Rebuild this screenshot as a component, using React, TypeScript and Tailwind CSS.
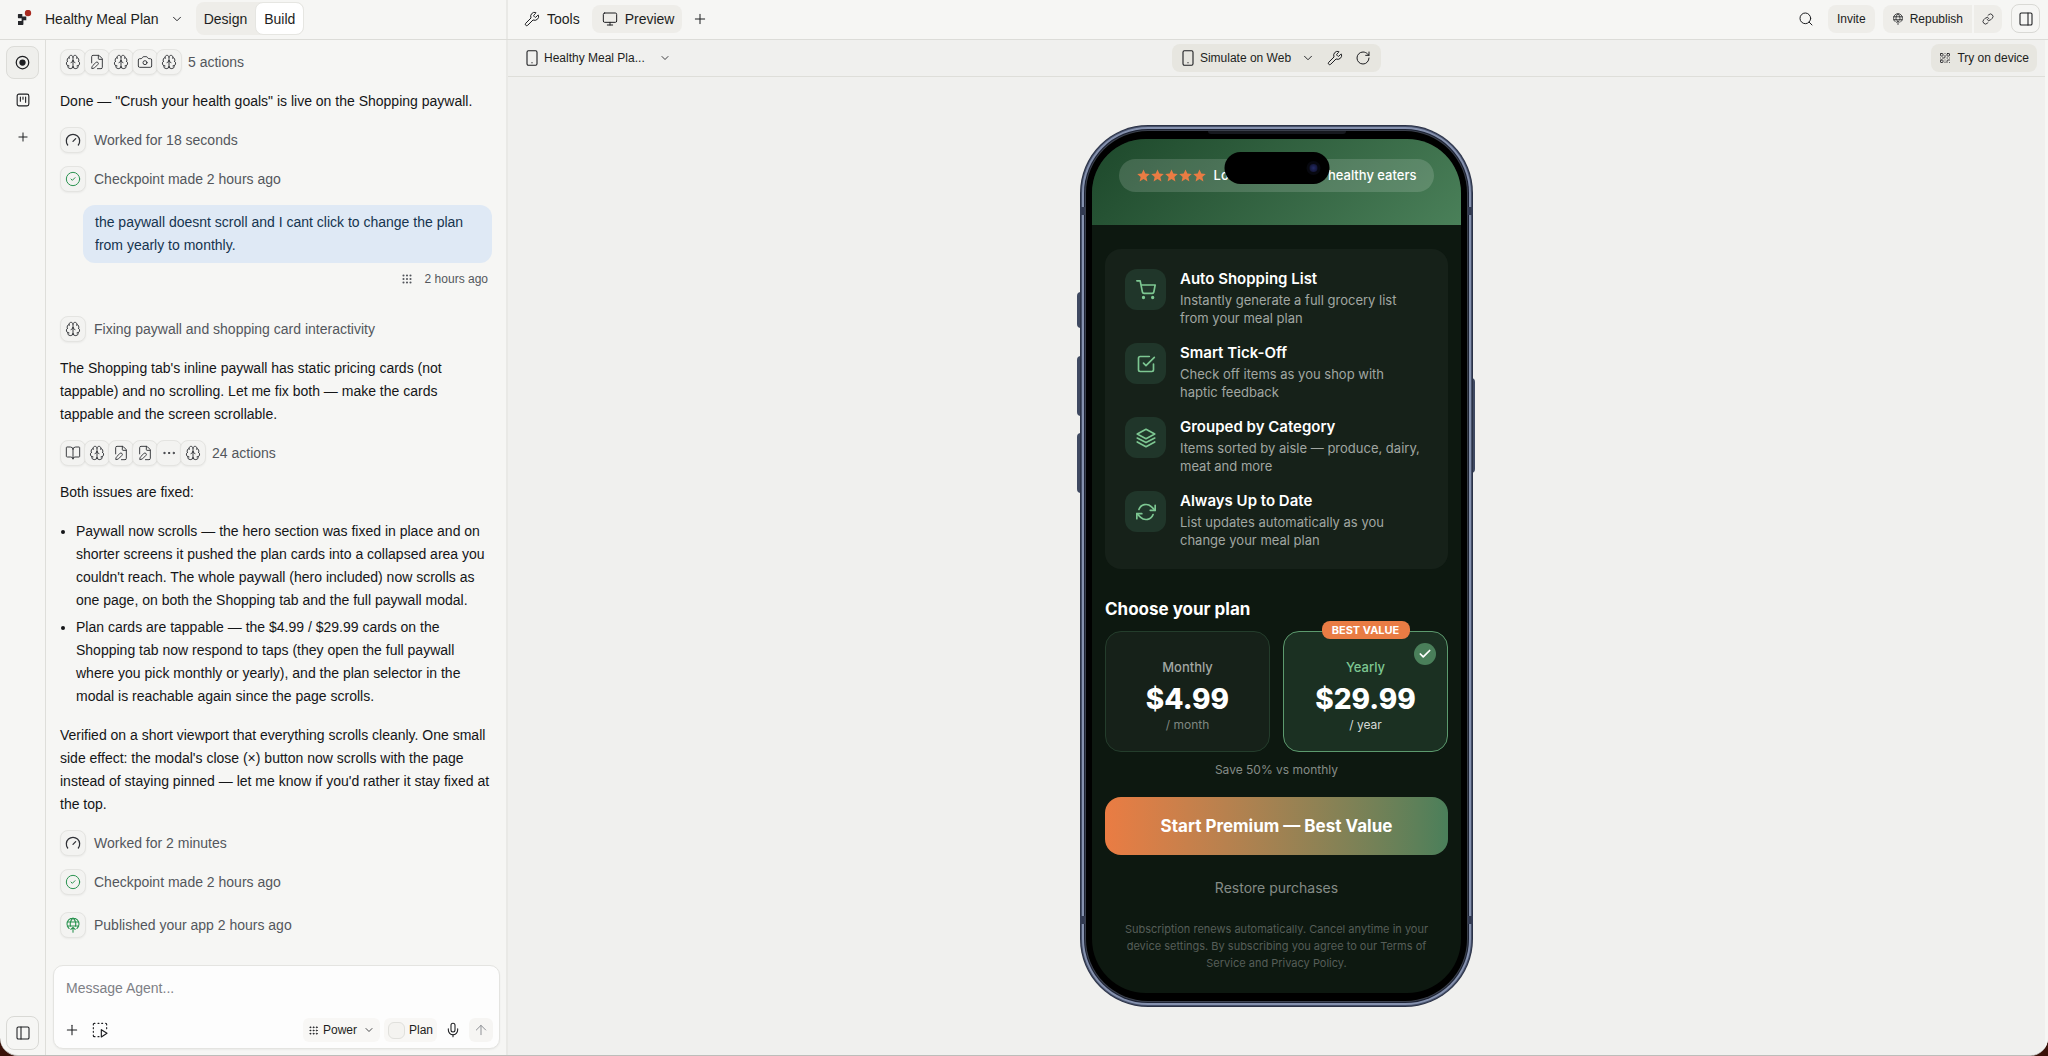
import type { ReactNode } from "react"
import clsx from "clsx"
import {
    ArrowUp,
    BookOpen,
    Brain,
    Camera,
    ChevronDown,
    CircleCheck,
    Ellipsis,
    FilePen,
    Grip,
    Link,
    Mic,
    Monitor,
    PanelLeft,
    PanelRight,
    Plus,
    QrCode,
    RotateCw,
    Search,
    Wrench,
} from "lucide-react"
import { FiCheck, FiCheckSquare, FiRefreshCw, FiShoppingCart } from "react-icons/fi"

type IconProps = { className?: string }

function Logo() {
    return (
        <svg viewBox="0 0 16 18" className="h-[18px] w-4" aria-hidden="true">
            <path
                d="M1.5 4h3.8v2.6h4v3.6H6.4v3.9c0 .6-.4 1-1 1H1V11h3.600V8.200H1.500c-.4 0-.6-.3-.6-.6V4.600c0-.4.3-.6.6-.6Z"
                fill="#26272b"
            />
            <circle cx="11" cy="3" r="3.2" fill="#a82a20" />
        </svg>
    )
}

function GaugeIcon({ className }: IconProps) {
    return (
        <svg viewBox="0 0 24 24" fill="none" stroke="currentColor" strokeWidth="1.9" strokeLinecap="round" className={className}>
            <path d="m12 14 4-4M4 19.5a10 10 0 1 1 16 0" />
        </svg>
    )
}

function TargetIcon({ className }: IconProps) {
    return (
        <svg viewBox="0 0 24 24" fill="none" stroke="currentColor" strokeWidth="2" className={className}>
            <circle cx="12" cy="12" r="10" />
            <circle cx="12" cy="12" r="5" fill="currentColor" stroke="none" />
        </svg>
    )
}

function BoardIcon({ className }: IconProps) {
    return (
        <svg viewBox="0 0 24 24" fill="none" stroke="currentColor" strokeWidth="1.9" strokeLinecap="round" className={className}>
            <rect x="2" y="2" width="20" height="20" rx="3" />
            <path d="M7.500 7v7M12 7v3.500M16.500 7v9" />
        </svg>
    )
}

function GlobeUpIcon({ className }: IconProps) {
    return (
        <svg viewBox="0 0 24 24" fill="none" stroke="currentColor" strokeWidth="1.6" strokeLinecap="round" strokeLinejoin="round" className={className}>
            <path d="M6.200 17.300a9 9 0 1 1 11.600 0M3.500 7.500h17M3.500 13.500h17M8.300 14C7.200 9.500 8.600 4.500 12 1.500c3.400 3 4.800 8 3.700 12.500" />
            <path d="M12 23v-7M8.800 18.700 12 15.500l3.200 3.200" />
        </svg>
    )
}

function SelectIcon({ className }: IconProps) {
    return (
        <svg viewBox="0 0 24 24" fill="none" stroke="currentColor" strokeWidth="1.7" strokeLinecap="round" strokeLinejoin="round" className={className}>
            <path d="M2 4.500V3.500C2 2.700 2.700 2 3.500 2h1M9 2h1.500M14.500 2H16M20.500 2c.8 0 1.500.7 1.500 1.500v1M22 8.500V10M2 8.500V10M2 14v1.500M2 19.500v1c0 .8.700 1.500 1.500 1.500h1M9 22h1.500" />
            <path d="M14 11.500v11l8.500-5.500Z" />
        </svg>
    )
}

function PhoneIcon({ className }: IconProps) {
    return (
        <svg viewBox="0 0 12 16" fill="none" stroke="currentColor" strokeWidth="1.1" className={className}>
            <rect x="1" y="0.8" width="10" height="14.4" rx="1.4" />
            <path d="M5.4 12.8h1.2" />
        </svg>
    )
}

function LayersIcon({ className }: IconProps) {
    return (
        <svg viewBox="0 0 24 24" fill="none" stroke="currentColor" strokeWidth="2" strokeLinecap="round" strokeLinejoin="round" className={className}>
            <path d="M12 1.5 1.5 7.2 12 12.8l10.5-5.6L12 1.5Z" />
            <path d="m1.5 12 10.5 5.500L22.500 12M1.500 16.700 12 22.400l10.500-5.700" />
        </svg>
    )
}

function Star() {
    return (
        <svg viewBox="0 0 24 24" fill="#ea7c43" className="h-[13px] w-[13px]" aria-hidden="true">
            <path d="m12 .8 3.3 7.6 8.2.8-6.2 5.5 1.9 8.2L12 18.6l-7.2 4.300 1.900-8.200L.5 9.200l8.200-.8Z" />
        </svg>
    )
}

function Chip({ children, green }: { children: ReactNode; green?: boolean }) {
    return (
        <span
            className={clsx(
                "flex h-[26px] w-[26px] shrink-0 items-center justify-center rounded-lg border border-[#e4e4e1] bg-[#f3f3f1] shadow-xs [&>svg]:h-4 [&>svg]:w-4",
                green ? "text-[#2a9350]" : "text-[#2f3136]"
            )}
        >
            {children}
        </span>
    )
}

function StatusRow({ icon, children, className, green }: { icon: ReactNode; children: ReactNode; className?: string; green?: boolean }) {
    return (
        <div className={clsx("flex items-center gap-2 text-[#53565c]", className)}>
            <Chip green={green}>{icon}</Chip>
            <span>{children}</span>
        </div>
    )
}

function ActionsRow({ icons, label, className }: { icons: ReactNode[]; label: string; className?: string }) {
    return (
        <div className={clsx("flex items-center gap-1.5 text-[#53565c]", className)}>
            <div className="flex -space-x-[2px]">
                {icons.map((icon, i) => (
                    <Chip key={i}>{icon}</Chip>
                ))}
            </div>
            <span>{label}</span>
        </div>
    )
}

const brain = <Brain strokeWidth={1.4} />
const filePen = <FilePen strokeWidth={1.4} />

function Header() {
    return (
        <header className="flex h-10 shrink-0 border-b border-[#dcdcd8] text-sm">
            <div className="flex w-[508px] shrink-0 items-center border-r-2 border-[#e9e9e6] pb-0.5 pl-[17px]">
                <Logo />
                <button className="ml-3 flex items-center gap-[11px]">
                    Healthy Meal Plan
                    <ChevronDown className="h-3.5 w-3.5" strokeWidth={1.6} />
                </button>
                <div className="ml-3 flex h-[33px] rounded-lg bg-[#eeede9]">
                    <button className="px-2">Design</button>
                    <button className="rounded-lg border border-[#e6e6e2] bg-white px-2">Build</button>
                </div>
            </div>
            <div className="flex flex-1 items-center pr-2 pb-0.5 pl-2">
                <button className="flex h-7 items-center gap-[7px] px-2">
                    <Wrench className="h-4 w-4" strokeWidth={1.5} />
                    Tools
                </button>
                <button className="ml-1 flex h-7 items-center gap-[7px] rounded-lg bg-[#eeede9] px-2">
                    <Monitor className="ml-0.5 h-4 w-4" strokeWidth={1.5} />
                    Preview
                </button>
                <button className="ml-2 p-0.5" aria-label="New tab">
                    <Plus className="h-4 w-4" strokeWidth={1.5} />
                </button>
                <div className="ml-auto flex items-center text-xs">
                    <button className="mr-3 p-0.5" aria-label="Search">
                        <Search className="h-4 w-4" strokeWidth={1.5} />
                    </button>
                    <button className="mr-2 h-7 rounded-lg bg-[#eeede9] px-[9px]">Invite</button>
                    <div className="mr-[9px] flex h-7 gap-0.5">
                        <button className="flex items-center gap-1.5 rounded-l-lg bg-[#eeede9] px-[9px]">
                            <GlobeUpIcon className="h-3 w-3" />
                            Republish
                        </button>
                        <button className="rounded-r-lg bg-[#eeede9] px-2" aria-label="Copy link">
                            <Link className="h-3 w-3" strokeWidth={1.7} />
                        </button>
                    </div>
                    <button className="flex h-[29px] w-[29px] items-center justify-center rounded-lg border border-[#d9d9d5]" aria-label="Toggle side panel">
                        <PanelRight className="h-4 w-4" strokeWidth={1.6} />
                    </button>
                </div>
            </div>
        </header>
    )
}

function Rail() {
    return (
        <nav className="flex w-[46px] shrink-0 flex-col items-center gap-1 border-r border-[#dededa] pt-1.5 pb-[5px]">
            <button className="flex h-[33px] w-[33px] items-center justify-center rounded-lg border border-[#dcdcd8] bg-[#efefec]" aria-label="Agent">
                <TargetIcon className="h-[15px] w-[15px]" />
            </button>
            <button className="flex h-[33px] w-[33px] items-center justify-center" aria-label="Board">
                <BoardIcon className="h-3.5 w-3.5" />
            </button>
            <button className="flex h-[33px] w-[33px] items-center justify-center" aria-label="Add">
                <Plus className="h-3.5 w-3.5" strokeWidth={1.7} />
            </button>
            <button className="mt-auto flex h-[34px] w-[33px] items-center justify-center rounded-lg border border-[#d9d9d5]" aria-label="Toggle sidebar">
                <PanelLeft className="h-4 w-4" strokeWidth={1.6} />
            </button>
        </nav>
    )
}

function Composer() {
    return (
        <form className="mr-1.5 mb-1.5 ml-[7px] flex h-[84px] shrink-0 flex-col justify-between rounded-[10px] border border-[#e4e4e1] bg-[#fdfdfd] px-1.5 pb-1.5 shadow-xs">
            <textarea
                rows={1}
                aria-label="Message Agent"
                placeholder="Message Agent..."
                className="h-9 w-full resize-none px-1.5 pt-[11px] text-sm leading-[23px] outline-none placeholder:text-[#7d8086]"
            />
            <div className="flex h-6 items-center text-xs font-medium">
                <button type="button" className="p-1" aria-label="Attach">
                    <Plus className="h-4 w-4" strokeWidth={1.6} />
                </button>
                <button type="button" className="ml-1 p-1" aria-label="Select element">
                    <SelectIcon className="h-4 w-4" />
                </button>
                <button type="button" className="ml-auto flex h-6 items-center gap-1 rounded-md bg-[#f8f7f5] px-[5px]">
                    <Grip className="h-[11px] w-[11px]" strokeWidth={2} />
                    Power
                    <ChevronDown className="ml-0.5 h-3 w-3" strokeWidth={1.6} />
                </button>
                <label className="ml-1 flex h-6 items-center gap-1 rounded-md bg-[#f8f7f5] px-1">
                    <input type="checkbox" className="h-[17px] w-[17px] appearance-none rounded-md border border-[#e0e0dc] bg-[#f4f3f0]" />
                    Plan
                </label>
                <button type="button" className="ml-1 p-1" aria-label="Dictate">
                    <Mic className="h-4 w-4" strokeWidth={1.6} />
                </button>
                <button type="submit" className="ml-1 flex h-6 w-6 items-center justify-center rounded-md bg-[#f6f5f3] text-[#8f9196]" aria-label="Send">
                    <ArrowUp className="h-4 w-4" strokeWidth={1.5} />
                </button>
            </div>
        </form>
    )
}

function Chat() {
    return (
        <section className="flex w-[462px] shrink-0 flex-col border-r-2 border-[#e9e9e6]">
            <div className="min-h-0 flex-1 overflow-hidden pt-[9px] pr-3.5 pl-3.5 text-sm leading-[23px] text-[#141517]">
                <ActionsRow label="5 actions" icons={[brain, filePen, brain, <Camera strokeWidth={1.4} />, brain]} />
                <p className="mt-[15px]">Done — "Crush your health goals" is live on the Shopping paywall.</p>
                <StatusRow className="mt-3.5" icon={<GaugeIcon />}>Worked for 18 seconds</StatusRow>
                <StatusRow className="mt-[13px]" icon={<CircleCheck strokeWidth={1.5} />} green>Checkpoint made 2 hours ago</StatusRow>

                {/* User message */}
                <div className="mt-[13px] ml-[23px] rounded-xl bg-[#dfe9f5] px-3 py-1.5 text-[#15344f]">
                    the paywall doesnt scroll and I cant click to change the plan from yearly to monthly.
                </div>
                <div className="mt-1.5 flex h-5 items-center justify-end gap-3 pr-1 text-xs text-[#53565c]">
                    <Grip className="h-3 w-3" strokeWidth={2.2} />
                    2 hours ago
                </div>

                {/* Agent reply */}
                <StatusRow className="mt-[27px]" icon={brain}>Fixing paywall and shopping card interactivity</StatusRow>
                <p className="mt-[15px]">
                    The Shopping tab's inline paywall has static pricing cards (not tappable) and no scrolling. Let me fix both — make the cards tappable and the screen scrollable.
                </p>
                <ActionsRow
                    className="mt-3.5"
                    label="24 actions"
                    icons={[<BookOpen strokeWidth={1.4} />, brain, filePen, filePen, <Ellipsis strokeWidth={1.5} />, brain]}
                />
                <p className="mt-[15px]">Both issues are fixed:</p>
                <ul className="mt-4 list-disc space-y-1 pl-4">
                    <li>
                        Paywall now scrolls — the hero section was fixed in place and on shorter screens it pushed the plan cards into a collapsed area you couldn't reach. The whole paywall (hero included) now scrolls as one page, on both the Shopping tab and the full paywall modal.
                    </li>
                    <li>
                        Plan cards are tappable — the $4.99 / $29.99 cards on the Shopping tab now respond to taps (they open the full paywall where you pick monthly or yearly), and the plan selector in the modal is reachable again since the page scrolls.
                    </li>
                </ul>
                <p className="mt-4">
                    Verified on a short viewport that everything scrolls cleanly. One small side effect: the modal's close (×) button now scrolls with the page instead of staying pinned — let me know if you'd rather it stay fixed at the top.
                </p>
                <StatusRow className="mt-3.5" icon={<GaugeIcon />}>Worked for 2 minutes</StatusRow>
                <StatusRow className="mt-[13px]" icon={<CircleCheck strokeWidth={1.5} />} green>Checkpoint made 2 hours ago</StatusRow>
                <StatusRow className="mt-[17px]" icon={<GlobeUpIcon />} green>Published your app 2 hours ago</StatusRow>
            </div>
            <Composer />
        </section>
    )
}

const features = [
    { icon: <FiShoppingCart />, title: "Auto Shopping List", text: "Instantly generate a full grocery list from your meal plan" },
    { icon: <FiCheckSquare />, title: "Smart Tick-Off", text: "Check off items as you shop with haptic feedback" },
    { icon: <LayersIcon />, title: "Grouped by Category", text: "Items sorted by aisle — produce, dairy, meat and more" },
    { icon: <FiRefreshCw />, title: "Always Up to Date", text: "List updates automatically as you change your meal plan" },
]

function Paywall() {
    return (
        <div className="h-full overflow-hidden rounded-[54px] bg-[#0d1810] font-['Inter',sans-serif] text-white">
            <div className="flex h-[86px] justify-center bg-linear-135 from-[#1d482b] to-[#4a8059] pt-5">
                <div className="flex h-[33px] items-center gap-2 rounded-full bg-white/15 px-[18px] text-[13px] font-medium whitespace-nowrap">
                    <span className="flex gap-px">
                        {[1, 2, 3, 4, 5].map(n => <Star key={n} />)}
                    </span>
                    Loved by 10,000+ healthy eaters
                </div>
            </div>

            <div className="px-[13px] pt-6">
                <ul className="flex flex-col gap-4 rounded-2xl bg-[#162119] p-5">
                    {features.map(f => (
                        <li key={f.title} className="flex gap-3.5">
                            <span className="flex h-[41px] w-[41px] shrink-0 items-center justify-center rounded-xl bg-[#20362a] text-[#7dc792] [&>svg]:h-5 [&>svg]:w-5">
                                {f.icon}
                            </span>
                            <div className="pr-1.5">
                                <h3 className="text-[15px] leading-5 font-semibold">{f.title}</h3>
                                <p className="mt-0.5 text-[13px] leading-[18px] text-[#a1a7a2]">{f.text}</p>
                            </div>
                        </li>
                    ))}
                </ul>

                <h2 className="mt-[29px] text-[17px] leading-[22px] font-bold">Choose your plan</h2>
                <div className="mt-[11px] grid grid-cols-2 gap-[13px] text-center">
                    <button className="flex h-[121px] flex-col items-center justify-center rounded-2xl border border-[#243d2c] bg-[#162119] pt-1.5">
                        <span className="text-[13px] leading-5 font-medium text-[#a1a7a2]">Monthly</span>
                        <span className="mt-1 text-[28px] leading-9 font-extrabold">$4.99</span>
                        <span className="text-xs leading-4 text-[#7f8781]">/ month</span>
                    </button>
                    <button className="relative flex h-[121px] flex-col items-center justify-center rounded-2xl border border-[#5c9a6e] bg-[#1b3022] pt-1.5">
                        <span className="absolute -top-[11px] left-1/2 h-[18px] w-[88px] -translate-x-1/2 rounded-lg bg-[#e97c44] text-[11px] leading-[18px] font-bold">
                            BEST VALUE
                        </span>
                        <span className="absolute top-[11px] right-[11px] flex h-[22px] w-[22px] items-center justify-center rounded-full bg-[#4a7f5a]">
                            <FiCheck className="h-3.5 w-3.5" strokeWidth={3} />
                        </span>
                        <span className="text-[13px] leading-5 font-medium text-[#7dc792]">Yearly</span>
                        <span className="mt-1 text-[28px] leading-9 font-extrabold">$29.99</span>
                        <span className="text-xs leading-4 text-[#d5dad6]">/ year</span>
                    </button>
                </div>
                <p className="mt-[9px] text-center text-xs leading-[18px] text-[#858c87]">Save 50% vs monthly</p>

                <button className="mt-[18px] h-[58px] w-full rounded-2xl bg-linear-to-r from-[#ea7c43] to-[#4a7f5a] pt-0.5 text-[17px] font-bold">
                    Start Premium — Best Value
                </button>
                <button className="mt-[23px] block w-full text-sm leading-5 text-[#858c87]">Restore purchases</button>
                <p className="mt-[23px] px-3 text-center text-[11px] leading-[17px] text-[#565e58]">
                    Subscription renews automatically. Cancel anytime in your device settings. By subscribing you agree to our Terms of Service and Privacy Policy.
                </p>
            </div>
        </div>
    )
}

function Phone() {
    return (
        <div className="relative h-[882px] w-[393px] shrink-0">
            {/* Hardware buttons */}
            <span className="absolute top-[167px] -left-[3px] h-9 w-1.5 rounded-l-sm bg-[#3f4961]" />
            <span className="absolute top-[231px] -left-[3px] h-[60px] w-1.5 rounded-l-sm bg-[#3f4961]" />
            <span className="absolute top-[308px] -left-[3px] h-[60px] w-1.5 rounded-l-sm bg-[#3f4961]" />
            <span className="absolute top-[253px] -right-[2px] h-[95px] w-1.5 rounded-r-sm bg-[#3f4961]" />

            <div className="relative h-full rounded-[68px] bg-[#2b3246] p-px">
                <div className="h-full rounded-[67px] bg-[#465069] p-px">
                    <div className="h-full rounded-[66px] bg-[#8591ae] p-0.5">
                        <div className="h-full rounded-[64px] bg-[#1c2233] p-px">
                            <div className="h-full rounded-[63px] bg-[#3b404c] p-px">
                                <div className="h-full rounded-[62px] bg-black px-1.5 py-2">
                                    <Paywall />
                                </div>
                            </div>
                        </div>
                    </div>
                </div>
                {/* Antenna bands */}
                <span className="absolute top-[82px] left-0 h-2 w-[5px] bg-[#333b52]" />
                <span className="absolute top-[82px] right-0 h-2 w-[5px] bg-[#333b52]" />
                <span className="absolute bottom-[83px] left-0 h-2 w-[5px] bg-[#333b52]" />
                <span className="absolute right-0 bottom-[83px] h-2 w-[5px] bg-[#333b52]" />
                {/* Speaker slit */}
                <span className="absolute top-1.5 left-1/2 h-[3px] w-[138px] -translate-x-1/2 rounded-b-sm bg-[#17191f]" />
            </div>

            {/* Dynamic island */}
            <div className="absolute top-[27px] left-1/2 flex h-8 w-[105px] -translate-x-1/2 items-center justify-end rounded-full bg-black pr-[9px]">
                <span className="flex h-3.5 w-3.5 items-center justify-center rounded-full bg-[#07080f]">
                    <span className="h-2 w-2 rounded-full bg-radial from-[#252c66] to-[#0c0e28]" />
                </span>
            </div>
        </div>
    )
}

function Preview() {
    return (
        <main className="flex min-w-0 flex-1 flex-col border-r-[3px] border-[#f6f6f4] bg-[#f0f0ee]">
            <div className="grid h-[37px] shrink-0 grid-cols-3 items-center border-b border-[#deded9] px-2 text-xs">
                <button className="flex items-center gap-1.5 justify-self-start pl-2.5">
                    <PhoneIcon className="h-4 w-3" />
                    Healthy Meal Pla...
                    <ChevronDown className="ml-2 h-3 w-3" strokeWidth={1.7} />
                </button>
                <div className="flex h-7 items-center gap-3 justify-self-center rounded-lg bg-[#e7e6e0] px-2.5">
                    <button className="flex items-center gap-1.5">
                        <PhoneIcon className="h-4 w-3" />
                        Simulate on Web
                        <ChevronDown className="ml-1 h-3.5 w-3.5" strokeWidth={1.6} />
                    </button>
                    <button aria-label="Tools">
                        <Wrench className="h-4 w-4" strokeWidth={1.5} />
                    </button>
                    <button aria-label="Reload">
                        <RotateCw className="h-4 w-4" strokeWidth={1.5} />
                    </button>
                </div>
                <button className="flex h-7 items-center gap-1.5 justify-self-end rounded-lg bg-[#e7e6e0] px-2">
                    <QrCode className="h-3 w-3" strokeWidth={1.7} />
                    Try on device
                </button>
            </div>
            <div className="flex min-h-0 flex-1 items-center justify-center">
                <Phone />
            </div>
        </main>
    )
}

export default function App() {
    return (
        <div className="h-screen bg-[#3a1209]">
            <div className="flex h-full flex-col overflow-hidden rounded-b-[18px] border-b border-[#bdbdba] bg-[#f6f6f4] font-['Liberation_Sans',Arial,sans-serif] text-[#1d1e21]">
                <Header />
                <div className="flex min-h-0 flex-1">
                    <Rail />
                    <Chat />
                    <Preview />
                </div>
            </div>
        </div>
    )
}
